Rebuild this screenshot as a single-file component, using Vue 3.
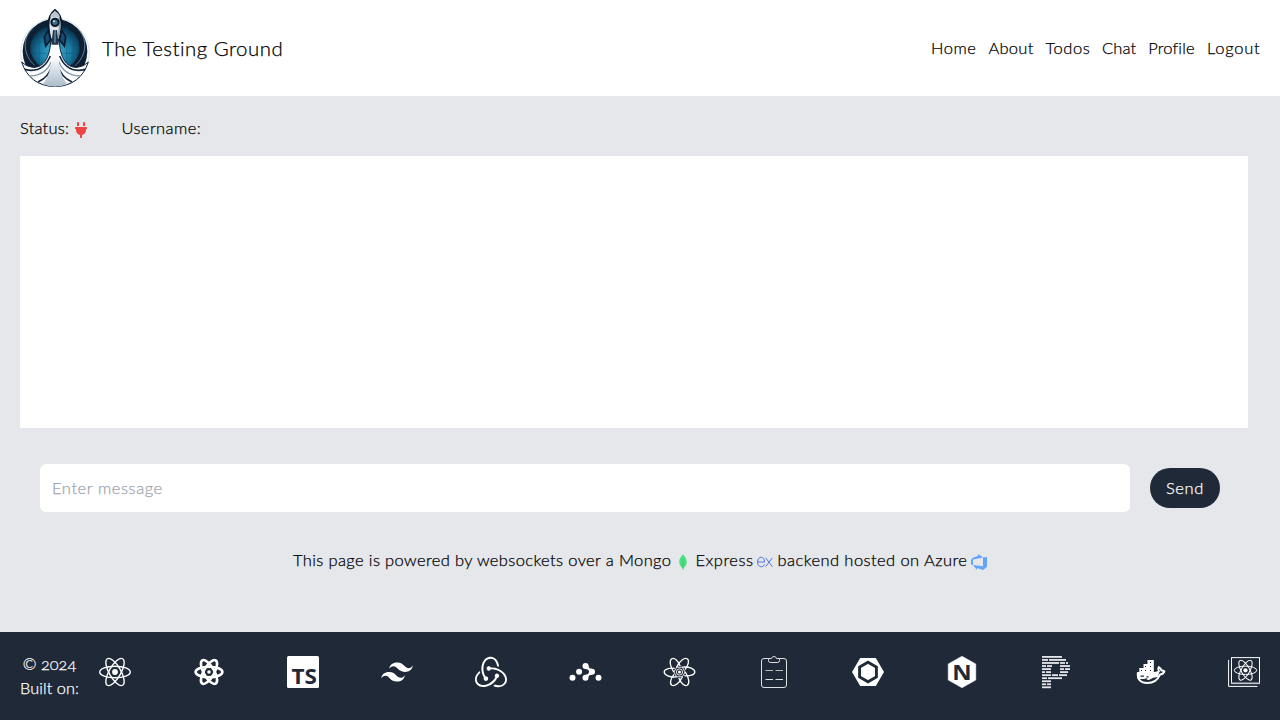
<script setup>
const nav = ['Home', 'About', 'Todos', 'Chat', 'Profile', 'Logout']

// Brick rows of the striped "P" mark: [x, width] pairs, one row per list
const bricks = [
  [[2, 20]],
  [[2, 6], [9, 17]],
  [[2, 17], [20, 5], [26, 2]],
  [[2, 4], [7, 5], [20, 10]],
  [[2, 9], [20, 4], [25, 5]],
  [[2, 3], [6, 5], [20, 8]],
  [[2, 9], [12, 6], [19, 8]],
  [[2, 5], [8, 14]],
  [[2, 9]],
  [[2, 4], [7, 4]],
  [[2, 9]],
]
</script>

<template>
  <div class="page">
    <header class="top">
      <div class="brand">
        <svg class="logo" viewBox="30 27 210 234">
          <defs>
            <radialGradient id="sky" cx="50%" cy="60%" r="58%">
              <stop offset="0" stop-color="#45b4d6" />
              <stop offset="0.55" stop-color="#1a7aa3" />
              <stop offset="1" stop-color="#07304a" />
            </radialGradient>
            <linearGradient id="trail" x1="0" y1="0" x2="0" y2="1">
              <stop offset="0.3" stop-color="#ffffff" />
              <stop offset="1" stop-color="#a9bccb" />
            </linearGradient>
          </defs>
          <circle cx="135" cy="158" r="103" fill="#fff" stroke="#c9d3da" stroke-width="2" />
          <circle cx="135" cy="154" r="97" fill="#0d1f33" />
          <ellipse cx="135" cy="143" rx="74" ry="68" fill="url(#sky)" />
          <path d="M88 95V200M170 78V215M190 95V200M62 125H208M60 160H210" stroke="#0b5677" stroke-width="2" fill="none" opacity=".6" />
          <path d="M70 84C36 112 38 165 74 196M200 84C234 112 232 165 196 196" stroke="#5f8098" stroke-width="3" fill="none" />
          <path d="M122 126C119 168 104 204 68 202Q46 199 35 186Q58 257 135 260Q212 257 235 186Q224 199 202 202C166 204 151 168 148 126Z" fill="#fff" stroke="#0d1f33" stroke-width="3" />
          <path d="M44 208Q98 222 121 168M226 208Q172 222 149 168" fill="none" stroke="#142a43" stroke-width="5" />
          <path d="M60 228Q108 226 123 186M210 228Q162 226 147 186" fill="none" stroke="#8299ac" stroke-width="4" />
          <path d="M84 246Q118 230 126 196M186 246Q152 230 144 196" fill="none" stroke="#142a43" stroke-width="5" />
          <path d="M126 128Q128 222 98 252Q135 268 172 252Q142 222 144 128Z" fill="url(#trail)" />
          <path d="M117 88L103 110L107 138L126 114ZM153 88L167 110L163 138L144 114Z" fill="#174c70" stroke="#0b1b2d" stroke-width="5" />
          <path d="M135 30C108 50 114 90 122 119H148C156 90 162 50 135 30Z" fill="#dfe6eb" stroke="#0b1b2d" stroke-width="6" />
          <path d="M135 32Q124 39 120 51H150Q146 39 135 32Z" fill="#b9c6d0" />
          <path d="M146 54Q153 82 143 115" stroke="#8ea0b0" stroke-width="5" fill="none" />
          <circle cx="135" cy="67" r="11" fill="#3f6c87" stroke="#0b1b2d" stroke-width="6" />
          <circle cx="132" cy="64" r="3" fill="#cde3ef" />
          <path d="M129 90H141L146 134H124Z" fill="#20364f" />
          <path d="M135 90V128" stroke="#91a8ba" stroke-width="3" />
        </svg>
        <span class="title">The Testing Ground</span>
      </div>
      <nav class="nav">
        <a v-for="n in nav" :key="n" :class="n.toLowerCase()">{{ n }}</a>
      </nav>
    </header>

    <main class="main">
      <div class="status">
        <span class="status-label">Status:</span>
        <svg class="plug" viewBox="0 0 12 16">
          <path fill="#ef4444" d="M2 1a1 1 0 0 1 2 0v3H2zM8 1a1 1 0 0 1 2 0v3H8zM.5 5h11a.5.5 0 0 1 .5.5v1a.5.5 0 0 1-.5.5H11v1a5 5 0 0 1-4 4.9V16H5v-3.1A5 5 0 0 1 1 8V7H.5a.5.5 0 0 1-.5-.5v-1A.5.5 0 0 1 .5 5z" />
        </svg>
        <span class="user-label">Username:</span>
      </div>
      <div class="messages"></div>
      <form class="composer" @submit.prevent>
        <input class="field" type="text" placeholder="Enter message" />
        <button class="send">Send</button>
      </form>
      <p class="powered">
        <span class="t1">This page is powered by websockets over a Mongo</span>
        <svg class="leaf" viewBox="0 0 16 16">
          <path fill="#4ade80" d="M8 0C8.6 1.6 11.7 3.6 11.7 8C11.7 11.2 9.8 13 8.6 14L8.3 16H7.7L7.4 14C6.2 13 4.3 11.2 4.3 8C4.3 3.6 7.4 1.6 8 0Z" />
          <path d="M8 5V14.5" stroke="#27b45e" stroke-width=".5" />
        </svg>
        <span class="t2">Express</span>
        <svg class="ex" viewBox="0 0 16 16">
          <path d="M.6 8H7.5C7.5 1.6.6 1.6.6 8C.6 14 6.7 13.8 7.4 10.2M8.6 3.8L15.4 12.7M15.4 3.8L8.6 12.7" fill="none" stroke="#4169e1" stroke-width=".9" />
        </svg>
        <span class="t3">backend hosted on Azure</span>
        <svg class="azure" viewBox="0 0 24 24">
          <path fill="#60a5fa" d="M0 8.877L2.247 5.91l8.405-3.416V.022l7.37 5.393L2.966 8.338v8.225L0 15.707zm24-4.45v14.651l-5.753 4.9-9.303-3.057v3.056l-5.978-7.416 15.057 1.798V5.415z" />
        </svg>
      </p>
    </main>

    <footer class="foot">
      <div class="credit">
        <div class="year">© 2024</div>
        <div class="built">Built on:</div>
      </div>
      <svg class="tech" viewBox="0 0 32 32">
        <g fill="none" stroke="#fff" stroke-width="1.4">
          <ellipse cx="16" cy="16" rx="15.3" ry="5.8" />
          <ellipse cx="16" cy="16" rx="15.3" ry="5.8" transform="rotate(60 16 16)" />
          <ellipse cx="16" cy="16" rx="15.3" ry="5.8" transform="rotate(120 16 16)" />
        </g>
        <circle cx="16" cy="16" r="2.9" fill="#fff" />
      </svg>
      <svg class="tech" viewBox="0 0 32 32">
        <g fill="none" stroke="#fff" stroke-width="2.6">
          <ellipse cx="16" cy="16" rx="13.4" ry="5.2" />
          <ellipse cx="16" cy="16" rx="13.4" ry="5.2" transform="rotate(60 16 16)" />
          <ellipse cx="16" cy="16" rx="13.4" ry="5.2" transform="rotate(120 16 16)" />
        </g>
        <circle cx="16" cy="16" r="1.8" fill="#fff" />
      </svg>
      <svg class="tech" viewBox="0 0 32 32">
        <rect width="32" height="32" rx="1.5" fill="#fff" />
        <text x="4.4" y="28.3" textLength="25.4" lengthAdjust="spacingAndGlyphs" class="ts">TS</text>
      </svg>
      <svg class="tech" viewBox="0 0 24 24">
        <path fill="#fff" d="M12.001 4.8c-3.2 0-5.2 1.6-6 4.8 1.2-1.6 2.6-2.2 4.2-1.8.913.228 1.565.89 2.288 1.624C13.666 10.618 15.027 12 18.001 12c3.2 0 5.2-1.6 6-4.8-1.2 1.6-2.6 2.2-4.2 1.8-.913-.228-1.565-.89-2.288-1.624C16.337 6.182 14.976 4.8 12.001 4.8zm-6 7.2c-3.2 0-5.2 1.6-6 4.8 1.2-1.6 2.6-2.2 4.2-1.8.913.228 1.565.89 2.288 1.624 1.177 1.194 2.538 2.576 5.512 2.576 3.2 0 5.2-1.6 6-4.8-1.2 1.6-2.6 2.2-4.2 1.8-.913-.228-1.565-.89-2.288-1.624C10.337 13.382 8.976 12 6.001 12z" />
      </svg>
      <svg class="tech" viewBox="0 0 24 24">
        <path fill="#fff" d="M16.634 16.504c.87-.075 1.543-.84 1.5-1.754-.047-.914-.796-1.648-1.709-1.648h-.061a1.71 1.71 0 00-1.648 1.769c.03.479.226.869.494 1.153-1.048 2.038-2.621 3.535-5.005 4.795-1.603.838-3.296 1.154-4.944.929-1.378-.194-2.456-.81-3.116-1.799-.988-1.499-1.078-3.116-.255-4.734.601-1.166 1.499-2.023 2.099-2.443a9.96 9.96 0 01-.42-1.543C-.868 14.408-.416 18.752.932 20.805c1.004 1.498 3.057 2.456 5.304 2.456.599 0 1.23-.044 1.843-.194 3.897-.749 6.848-3.086 8.541-6.532zm5.348-3.746c-2.32-2.728-5.738-4.226-9.634-4.226h-.51c-.253-.554-.837-.899-1.498-.899h-.045c-.943 0-1.678.81-1.647 1.753.03.898.794 1.648 1.708 1.648h.074a1.69 1.69 0 001.499-1.049h.555c2.309 0 4.495.674 6.488 1.992 1.527 1.005 2.622 2.323 3.237 3.896.538 1.288.509 2.547-.045 3.597-.855 1.647-2.294 2.517-4.196 2.517-1.199 0-2.367-.375-2.967-.644-.36.298-.96.793-1.394 1.093 1.318.598 2.652.943 3.94.943 2.922 0 5.093-1.647 5.918-3.236.898-1.798.824-4.824-1.47-7.416zM6.49 17.042c.03.899.793 1.648 1.708 1.648h.06a1.688 1.688 0 001.648-1.768c0-.9-.779-1.647-1.693-1.647h-.06c-.06 0-.149 0-.226.029-1.243-2.098-1.768-4.347-1.572-6.772.12-1.828.72-3.417 1.797-4.735.899-1.124 2.592-1.678 3.746-1.708 3.236-.061 4.585 3.971 4.689 5.574l1.498.45c-.345-4.914-3.4-7.492-6.322-7.492-2.742 0-5.273 1.993-6.293 4.915-1.398 3.896-.479 7.643 1.229 10.625-.15.195-.24.539-.209.881z" />
      </svg>
      <svg class="tech" viewBox="-.5 0 32 32">
        <g fill="#fff">
          <circle cx="3" cy="21.8" r="3" />
          <circle cx="9.6" cy="15.8" r="3" />
          <circle cx="16" cy="10" r="3" />
          <circle cx="16" cy="21.8" r="3" />
          <circle cx="29" cy="21.8" r="3" />
          <circle cx="22.5" cy="15.8" r="3" />
          <path d="M17.5 7.4Q19.3 8.5 19.2 11Q19.5 12.8 22.5 12.8V18.8Q19.5 18.9 18.9 21L15.5 18.9Q19.4 18.8 19.5 15.8Q19.4 13 15.5 13Z" />
        </g>
      </svg>
      <svg class="tech" viewBox="-.5 0 32 32">
        <g fill="none" stroke="#fff" stroke-width="1.3">
          <path v-for="a in [0, 60, 120, 180, 240, 300]" :key="a" :transform="`rotate(${a} 16 16)`" d="M11.2 12.4C6 11.6.7 13 .7 16C.7 19 6 21.6 13.2 20.9" />
          <path d="M13.2 11.2h5.6L21.6 16l-2.8 4.8h-5.6L10.4 16z" stroke-width=".9" />
          <circle cx="16" cy="16" r="3.1" stroke-width=".9" />
        </g>
        <circle cx="16" cy="16" r="1.5" fill="#fff" />
      </svg>
      <svg class="tech" viewBox="0 0 32 32">
        <g fill="none" stroke="#dfe2e5" stroke-width="1">
          <path d="M10.5 2.5H6A2.5 2.5 0 0 0 3.5 5V29A2.5 2.5 0 0 0 6 31.5H26A2.5 2.5 0 0 0 28.5 29V5A2.5 2.5 0 0 0 26 2.5H21.5" />
          <path d="M10.5 2.5H13.5Q14 .5 16 .5T18.5 2.5H21.5V4.5Q21.5 6.5 19.5 6.5H12.5Q10.5 6.5 10.5 4.5Z" />
          <path d="M7.5 14.5H15M17.5 14.5H25" opacity=".8" />
          <path d="M7.5 23.5H15M17.5 23.5H25" />
        </g>
      </svg>
      <svg class="tech" viewBox="0 0 32 32">
        <path d="M8.2 2H23.8L32 16L23.8 30H8.2L0 16Z" fill="#fff" />
        <path d="M16 6.2L24.4 11.1V20.9L16 25.8L7.6 20.9V11.1Z" fill="none" stroke="#1f2937" stroke-width="2.9" />
      </svg>
      <svg class="tech" viewBox="0 0 32 32">
        <path d="M16 .2L29.8 8V24L16 31.8L2.2 24V8Z" fill="#fff" stroke="#fff" stroke-width=".5" stroke-linejoin="round" />
        <text x="6.3" y="23.7" textLength="19.4" lengthAdjust="spacingAndGlyphs" class="ng">N</text>
      </svg>
      <svg class="tech" viewBox="0 0 32 32">
        <template v-for="(row, r) in bricks" :key="r">
          <rect v-for="b in row" :key="b[0]" :x="b[0]" :y="r * 3.04" :width="b[1]" height="1.8" fill="#e4e7ea" />
        </template>
      </svg>
      <svg class="tech" viewBox="0 0 32 32">
        <path d="M3.8 17H20.5Q24.3 17 25 15.2Q23.6 13 24.8 11Q27.2 12.4 27.5 14.6Q29 14.3 30.4 15.3Q29.3 18.3 26 18.6C23.5 24.4 19 27 13.3 27C6.5 27 3.2 23.2 3.8 17Z" fill="none" stroke="#fff" stroke-width="2" stroke-linejoin="round" />
        <path d="M4 17H25L24 21Q19 21 15 24Q10 22.8 4.5 23Z" fill="#fff" />
        <path d="M6.5 20.2H10M12.5 20.8h2M7.5 23.3Q10.5 24.5 13 22.6" stroke="#1f2937" stroke-width="1.3" fill="none" />
        <path d="M5.3 12H9.5V8H13.5V4H19.8V17H5.3Z" fill="#fff" />
        <g fill="#1f2937">
          <rect x="7" y="14" width="1" height="1" />
          <rect x="11" y="14" width="1" height="1" />
          <rect x="16" y="14" width="1" height="1" />
          <rect x="11" y="10" width="1" height="1" />
          <rect x="16" y="10" width="1" height="1" />
          <rect x="16" y="6" width="1" height="1" />
        </g>
      </svg>
      <svg class="tech" viewBox="0 0 32 32">
        <g fill="none" stroke="#fff">
          <path d="M.6 4V30.4H29.5" />
          <rect x="3.5" y="1.6" width="28" height="26" />
          <path d="M3 27H32" stroke="#aab0b8" stroke-width="1.2" />
          <ellipse cx="17.5" cy="14.3" rx="11.2" ry="4.2" />
          <ellipse cx="17.5" cy="14.3" rx="11.2" ry="4.2" transform="rotate(60 17.5 14.3)" />
          <ellipse cx="17.5" cy="14.3" rx="11.2" ry="4.2" transform="rotate(120 17.5 14.3)" />
        </g>
        <circle cx="17.5" cy="14.3" r="2.1" fill="#fff" />
      </svg>
    </footer>
  </div>
</template>

<style>
body { margin: 0; }
</style>

<style scoped>
.page {
  box-sizing: border-box;
  height: 720px;
  display: flex;
  flex-direction: column;
  background: #e5e7eb;
  color: #000;
  font: 300 16.5px/24px Lato, sans-serif;
  -webkit-text-stroke: 0.25px currentColor;
  overflow: hidden;
}
.top {
  flex: none;
  box-sizing: border-box;
  height: 96px;
  padding: 0 20px;
  display: flex;
  align-items: center;
  justify-content: space-between;
  background: #fff;
}
.brand { display: flex; align-items: center; gap: 12px; }
.logo { width: 70px; height: 78px; display: block; }
.title { font-size: 20.4px; line-height: 28px; letter-spacing: 0.5px; white-space: nowrap; }
.nav { display: flex; gap: 12px; }
.nav a { white-space: nowrap; }
.home { width: 45.5px; letter-spacing: 0.5px; }
.about { width: 45px; letter-spacing: 0.25px; }
.todos { width: 44.5px; letter-spacing: 0.55px; }
.chat { width: 34.3px; letter-spacing: 0.15px; }
.profile { width: 46.7px; letter-spacing: 0.15px; }
.logout { width: 53px; letter-spacing: 0.75px; }
.main { flex: 1; display: flex; flex-direction: column; }
.status { height: 24px; margin: 20px 20px 16px; display: flex; align-items: center; }
.status-label { width: 55px; letter-spacing: 0.2px; }
.plug { width: 12px; height: 16px; margin: 4px 34.5px 0 0; }
.user-label { letter-spacing: 0.4px; }
.messages { height: 272px; margin: 0 32px 0 20px; background: #fff; }
.composer { display: flex; align-items: center; gap: 20px; margin: 36px 60px 0 40px; }
.field {
  flex: 1;
  box-sizing: border-box;
  height: 48px;
  padding: 0 12px;
  border: 0;
  border-radius: 6px;
  background: #fff;
  font: inherit;
  letter-spacing: 0.58px;
  outline: none;
}
.field::placeholder { color: #9ca3af; opacity: 1; }
.send {
  width: 70px;
  height: 40px;
  padding: 0;
  border: 0;
  border-radius: 20px;
  background: #1f2937;
  color: #fff;
  font: inherit;
  letter-spacing: 0.65px;
}
.powered {
  display: flex;
  align-items: center;
  height: 24px;
  margin: 36px 0 0 293px;
  white-space: nowrap;
}
.powered svg { width: 16px; height: 16px; margin-top: 4px; flex: none; }
.t1 { width: 382px; letter-spacing: 0.37px; }
.leaf { margin-right: 4.5px; }
.t2 { width: 61.5px; letter-spacing: 0.5px; }
.ex { margin-right: 4.5px; }
.t3 { width: 193.5px; letter-spacing: 0.43px; }
.foot {
  flex: none;
  box-sizing: border-box;
  height: 88px;
  padding: 20px;
  display: flex;
  justify-content: space-between;
  background: #1f2937;
  color: #fff;
}
.credit { width: 59px; margin-right: -42px; text-align: center; white-space: nowrap; font-size: 16.3px; font-variant-numeric: oldstyle-nums; }
.year { letter-spacing: 0.05px; }
.built { letter-spacing: 0.1px; }
.tech { width: 32px; height: 32px; margin-top: 4px; display: block; flex: none; overflow: visible; }
.tech text { -webkit-text-stroke: 0; fill: #1f2937; font-family: 'Open Sans', sans-serif; font-weight: 700; }
.ts { font-size: 21.5px; }
.ng { font-size: 21px; }
</style>
